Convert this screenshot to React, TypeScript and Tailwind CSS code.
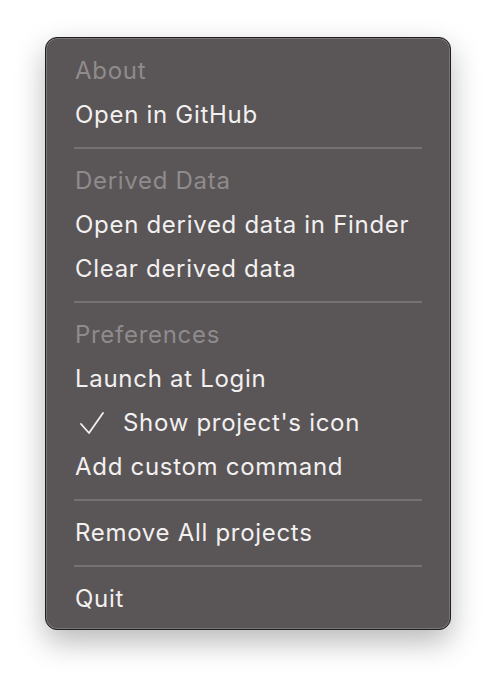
import React from 'react';

type Entry =
  | { kind: 'header'; label: string }
  | { kind: 'item'; label: string; checked?: boolean }
  | { kind: 'sep' };

const entries: Entry[] = [
  { kind: 'header', label: 'About' },
  { kind: 'item', label: 'Open in GitHub' },
  { kind: 'sep' },
  { kind: 'header', label: 'Derived Data' },
  { kind: 'item', label: 'Open derived data in Finder' },
  { kind: 'item', label: 'Clear derived data' },
  { kind: 'sep' },
  { kind: 'header', label: 'Preferences' },
  { kind: 'item', label: 'Launch at Login' },
  { kind: 'item', label: "Show project's icon", checked: true },
  { kind: 'item', label: 'Add custom command' },
  { kind: 'sep' },
  { kind: 'item', label: 'Remove All projects' },
  { kind: 'sep' },
  { kind: 'item', label: 'Quit' },
];

const Check = () => (
  <svg width="24" height="22" viewBox="0 0 24 22" className="ml-[5px] mr-[19px] shrink-0">
    <polyline points="1,12 9,21 23,1" fill="none" stroke="#f2f0f0" strokeWidth="1.8" strokeLinecap="round" strokeLinejoin="round" />
  </svg>
);

export default function App() {
  return (
    <div className="w-[496px] h-[684px] bg-white pt-[37px] pl-[45px]" style={{ fontFamily: 'Inter, "Noto Sans", sans-serif' }}>
      <div className="w-[406px] h-[593px] rounded-[12px] border border-[#1f1d1e] bg-[#5a5556] pt-[11px] shadow-[inset_0_0_0_1px_#7a7677,0_12px_30px_rgba(0,0,0,0.28)]">
        {entries.map((e, i) => {
          if (e.kind === 'sep') {
            return (
              <div key={i} className="h-[22px] flex items-center px-[28px]">
                <div className="w-full h-[2px] bg-[#767273]" />
              </div>
            );
          }
          return (
            <div
              key={i}
              className={`h-[44px] flex items-center pl-[29px] text-[24px] tracking-[0.7px] ${e.kind === 'header' ? 'text-[#8f8b8c]' : 'text-[#f2f0f0]'}`}
            >
              {e.kind === 'item' && e.checked && <Check />}
              <span>{e.label}</span>
            </div>
          );
        })}
      </div>
    </div>
  );
}
